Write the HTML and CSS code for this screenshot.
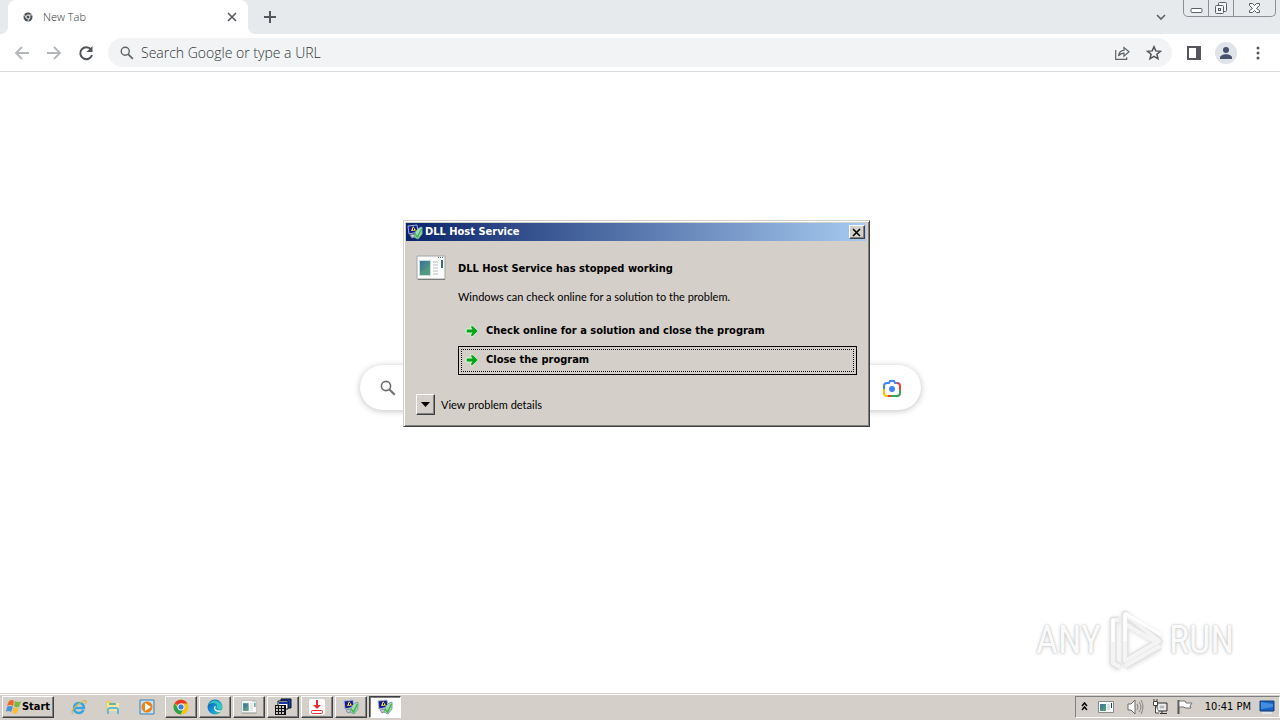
FILE: index.html
```html
<!DOCTYPE html>
<html lang="en">
<head>
<meta charset="utf-8">
<title>New Tab</title>
<link rel="stylesheet" href="styles.css">
</head>
<body>
<svg class="defs" aria-hidden="true">
  <defs>
    <linearGradient id="green" x1="0" y1="0" x2="1" y2="1"><stop offset="0" stop-color="#5fdc62"/><stop offset="1" stop-color="#009e12"/></linearGradient>
    <linearGradient id="pane" x1="0" y1="0" x2="1" y2="1"><stop offset="0" stop-color="#3c6d9c"/><stop offset="1" stop-color="#58a77b"/></linearGradient>
    <linearGradient id="edge" x1="0" y1="0" x2="1" y2="1"><stop offset="0" stop-color="#0b56a4"/><stop offset=".55" stop-color="#1697dc"/><stop offset="1" stop-color="#55d07a"/></linearGradient>
    <symbol id="report" viewBox="0 0 16 16">
      <path d="m1 2 9-1 1 7-9 2z" fill="#101c8c" stroke="#a9b2dc"/>
      <path d="m6 2 3 4.500-5 .5z" fill="#ffe13b"/><path d="M6 4h1v2H6z" fill="#222"/>
      <path d="m3 11 5-1 1 2-4 2z" fill="#c6cad4" stroke="#889"/>
      <path d="m9 7 3-3 3-1v7l-4 5-4-2z" fill="#a5d9b0" stroke="#7ea5a4"/>
      <path d="m8 10 2.500 3 4-8" fill="none" stroke="#3fba4d" stroke-width="1.600"/>
    </symbol>
    <symbol id="window" viewBox="0 0 30 26">
      <path d="M1 1h28v23H1z" fill="#fafbfa" stroke="#a1a7a6"/>
      <path d="M2 24.500h27" stroke="#777c79"/><path d="M3 5h12v16H3z" fill="#c9dddd"/>
      <path d="M4 6h10v14H4z" fill="url(#pane)"/><path d="m4 17 10-6v9H4z" fill="#5a9b82" opacity=".6"/>
      <path d="M17 7h5m-5 3h5m-5 3h5m-5 3h5m-5 3h5" stroke="#b9c0c0"/>
      <path d="M22 2.500h1m1 0h1m1 0h1" stroke="#377b75"/><path d="M25 5h2v8h-2z" fill="#3d6f72"/>
    </symbol>
    <symbol id="arrow" viewBox="0 0 14 14"><path d="M1 5h6L5 2l2-1 6 6-6 6-2-1 2-3H1z" fill="url(#green)" stroke="#d9f5d6"/><path d="M2 7h8M7 3l4 4-4 4" fill="none" stroke="#08a51c" stroke-width="2.400"/></symbol>
    <symbol id="search" viewBox="0 0 16 16"><circle cx="6" cy="6" r="4.600" fill="none" stroke="currentColor" stroke-width="1.600"/><path d="m9.200 9.200 5.500 5.500" stroke="currentColor" stroke-width="2"/></symbol>
  </defs>
</svg>

<header class="tabstrip">
  <div class="tab">
    <svg class="favicon" viewBox="0 0 10 10"><circle cx="5" cy="5" r="4.500" fill="#4c5054"/><path d="M5 3h4M3.200 6 1.300 2.800M6.700 6 4.800 9.300" stroke="#d8dadd"/><circle cx="5" cy="5" r="2" fill="#4c5054" stroke="#eee"/></svg>
    <span class="tab-title">New Tab</span>
    <button class="plain tab-close" aria-label="Close tab"><svg width="10" height="10" viewBox="0 0 10 10"><path d="m1 1 8 8m0-8-8 8" stroke="#55595e" stroke-width="1.600"/></svg></button>
  </div>
  <button class="plain new-tab" aria-label="New tab"><svg width="12" height="12" viewBox="0 0 12 12"><path d="M6 0v12M0 6h12" stroke="#54585d" stroke-width="2"/></svg></button>
  <button class="plain tab-search" aria-label="Search tabs"><svg width="10" height="8" viewBox="0 0 10 8"><path d="m1 2 4 4 4-4" fill="none" stroke="#5f6368" stroke-width="1.600"/></svg></button>
  <div class="window-controls">
    <button class="plain" aria-label="Minimize"><svg width="13" height="16" viewBox="0 0 13 16"><rect x="1" y="8.500" width="11" height="4" rx="1" fill="#fff" stroke="#5b6068"/></svg></button>
    <button class="plain" aria-label="Restore"><svg width="14" height="16" viewBox="0 0 14 16"><g fill="#f3f5f6" stroke="#5b6068"><rect x="4.500" y="2.500" width="8" height="9" rx="1"/><rect x="1.500" y="5.500" width="8" height="8" rx="1"/><rect x="4.500" y="8.500" width="2" height="2"/></g></svg></button>
    <button class="plain wide" aria-label="Close"><svg width="13" height="16" viewBox="0 0 13 16"><path d="M1.500 3.500h3l2 2 2-2h3v2l-3 3 3 2v2h-3l-2-2-2 2h-3v-2l3-2-3-3z" fill="#fff" stroke="#5b6068"/></svg></button>
  </div>
</header>

<nav class="toolbar">
  <button class="plain nav" aria-label="Back"><svg width="16" height="16" viewBox="0 0 16 16"><path d="M15 8H2m6-6L2 8l6 6" fill="none" stroke="#b4b7bb" stroke-width="1.800"/></svg></button>
  <button class="plain nav" aria-label="Forward"><svg width="16" height="16" viewBox="0 0 16 16"><path d="M1 8h13M8 2l6 6-6 6" fill="none" stroke="#b4b7bb" stroke-width="1.800"/></svg></button>
  <button class="plain nav" aria-label="Reload"><svg width="16" height="16" viewBox="0 0 16 16"><path d="M13 4.500A6 6 0 1 0 14 10" fill="none" stroke="#505459" stroke-width="2"/><path d="M14.500 1v6h-6z" fill="#505459"/></svg></button>
  <div class="omnibox">
    <svg class="omni-icon" viewBox="0 0 16 16"><use href="#search"/></svg>
    <input class="omni-input" type="text" aria-label="Address" placeholder="Search Google or type a URL">
    <button class="plain action" aria-label="Share"><svg width="16" height="16" viewBox="0 0 16 16"><path d="M1.700 5v9.300h11v-2M4.500 11C5 7.500 7 5.500 10 5.400V2.500l5 4.300-5 4.300V8.200C7.500 8.200 6 9 4.500 11z" fill="none" stroke="#5f6368" stroke-width="1.200"/></svg></button>
    <button class="plain action" aria-label="Bookmark"><svg width="16" height="16" viewBox="0 0 16 16"><path d="m8 1.700 1.800 4.200 4.600.4-3.500 3 1.100 4.500L8 11.400l-4 2.400 1.100-4.500-3.500-3 4.600-.4z" fill="none" stroke="#505459" stroke-width="1.500"/></svg></button>
  </div>
  <button class="plain tool" aria-label="Side panel"><svg width="14" height="14" viewBox="0 0 14 14"><path d="M1 1h12v12H1z" fill="#fff" stroke="#56565c" stroke-width="2"/><path d="M9 0h5v14H9z" fill="#56565c"/></svg></button>
  <button class="plain tool" aria-label="Profile"><svg width="22" height="22" viewBox="0 0 22 22"><circle cx="11" cy="11" r="11" fill="#dfe3ea"/><circle cx="11" cy="8" r="3" fill="#46516c"/><path d="M5 16c0-5 12-5 12 0v1H5z" fill="#46516c"/></svg></button>
  <button class="plain tool" aria-label="Menu"><svg width="4" height="14" viewBox="0 0 4 14"><g fill="#54585d"><circle cx="2" cy="2" r="1.500"/><circle cx="2" cy="7" r="1.500"/><circle cx="2" cy="12" r="1.500"/></g></svg></button>
</nav>

<main class="page">
  <div class="searchbox">
    <svg class="search-icon" viewBox="0 0 16 16"><use href="#search"/></svg>
    <input class="search-input" type="text" aria-label="Search">
    <button class="plain" aria-label="Search by image"><svg width="18" height="18" viewBox="0 0 18 18"><g fill="none" stroke-width="2"><path d="M4 4h2l1-2h4l1 2h2" stroke="#4285f4"/><path d="M14 4q3 0 3 3v4" stroke="#ea4335"/><path d="M1 9v5q0 3 3 3h2" stroke="#fbbc04"/><path d="M5 17h4" stroke="#ea4335"/><path d="M8 17h6q3 0 3-3v-3" stroke="#34a853"/><path d="M1 10V7q0-3 3-3" stroke="#4285f4"/></g><circle cx="9" cy="10" r="3" fill="#4285f4"/></svg></button>
  </div>

  <section class="dialog" role="dialog" aria-labelledby="caption">
    <div class="caption">
      <svg class="icon16" viewBox="0 0 16 16"><use href="#report"/></svg>
      <span id="caption" class="caption-text">DLL Host Service</span>
      <button class="raised dialog-close" aria-label="Close"><svg width="10" height="9" viewBox="0 0 10 9"><path d="m1 1 7 7m0-7-7 7" stroke="#000" stroke-width="1.600"/></svg></button>
    </div>
    <div class="dialog-body">
      <svg class="app-icon" viewBox="0 0 30 26"><use href="#window"/></svg>
      <div class="message">
        <h1 class="headline">DLL Host Service has stopped working</h1>
        <p class="detail">Windows can check online for a solution to the problem.</p>
        <button class="choice"><svg class="arrow" viewBox="0 0 14 14"><use href="#arrow"/></svg>Check online for a solution and close the program</button>
        <button class="choice focused"><svg class="arrow" viewBox="0 0 14 14"><use href="#arrow"/></svg>Close the program</button>
      </div>
    </div>
    <div class="dialog-footer">
      <button class="raised expander" id="expander" aria-labelledby="expander-label"><svg width="9" height="5" viewBox="0 0 9 5"><path d="M0 0h9L4.500 5z"/></svg></button>
      <label id="expander-label" for="expander">View problem details</label>
    </div>
  </section>

  <div class="watermark">
    <span class="mark-text">ANY</span>
    <svg class="mark-logo" viewBox="0 0 60 62"><g stroke-linejoin="round" fill="none"><path d="M20 5v47l34-20zM14 11H8v43l7 4M20 57l35-20" stroke="#e3e3e3" stroke-width="7"/><path d="M20 5v47l34-20zM14 11H8v43l7 4M20 57l35-20M20 15l29 17" stroke="#f4f4f4" stroke-width="4"/><path d="m20 4 36 22M8 10v23M20 5v27" stroke="#fff" stroke-width="3"/></g></svg>
    <span class="mark-text">RUN</span>
  </div>
</main>

<footer class="taskbar">
  <button class="raised start"><svg width="16" height="16" viewBox="1 0 16 16"><path d="M4 2q3-2 5 0L8 7q-3-2-6 0z" fill="#ef6427"/><path d="M10 2q3 2 6 0l-2 6q-3 1-5-1z" fill="#79b83a"/><path d="M2 8q3-2 6 0l-2 5q-3-2-5 0z" fill="#4b91dc"/><path d="M9 8q2 2 5 1l-2 5q-3 2-5-1z" fill="#f9bd2f"/></svg>Start</button>
  <div class="quick">
    <button class="plain" aria-label="Internet Explorer"><svg class="icon16" viewBox="0 0 16 16"><path d="M12.500 11Q11 14 8 14q-5 0-5-5t5-5q5 0 5 5H4" fill="none" stroke="#35a5dc" stroke-width="2.400"/><path d="M2 15Q-1 12 6 6q8-6 9-4 .500 1-1 3" fill="none" stroke="#d4b44c" stroke-width="1.200"/></svg></button>
    <button class="plain" aria-label="Explorer"><svg class="icon16" viewBox="0 0 16 16"><path d="M1 2h5l1 2h7v8H1z" fill="#e6cd6c"/><path d="M2 4h12v8H2z" fill="#f7e6a1"/><path d="M3 15v-4q0-2 2-2h6q2 0 2 2v4" fill="none" stroke="#65b8d4" stroke-width="2"/><path d="M4 5h7" stroke="#69b6a0" stroke-width="2"/></svg></button>
    <button class="plain" aria-label="Media Player"><svg class="icon16" viewBox="0 0 16 16"><path d="M1 1h14v14H1z" fill="#c7dfee" stroke="#3a82b7"/><circle cx="8" cy="8" r="5.500" fill="#ee8115"/><path d="m6 4 6 4-6 4z" fill="#fff"/></svg></button>
  </div>
  <div class="tasks">
    <button class="raised task" aria-label="Chrome"><svg class="icon16" viewBox="0 0 16 16"><circle cx="8" cy="8" r="7.500" fill="#fbc116"/><path d="M8 8 1.500 4.300A7.500 7.500 0 0 1 14.500 4.500H8z" fill="#e33b2e"/><path d="M1.500 4.300A7.500 7.500 0 0 0 7.500 15.500L10.500 9.500 5 9z" fill="#2ba24c"/><circle cx="8" cy="8" r="3.200" fill="#377de2" stroke="#fff"/></svg></button>
    <button class="raised task" aria-label="Edge"><svg class="icon16" viewBox="0 0 16 16"><circle cx="8" cy="8" r="7.500" fill="url(#edge)"/><path d="M1 6q5-8 12-2 4 4 1 6-3 1-4-1 1-5-4-5-3 0-5 2" fill="#35c7bd"/><path d="M9 7q-2 3 1 4 2 1 5 0l-2 2q-6 0-6-4 0-2 2-2" fill="#eaf6f8"/></svg></button>
    <button class="raised task" aria-label="Program"><svg class="icon16" viewBox="0 0 30 26"><use href="#window"/></svg></button>
    <button class="raised task" aria-label="Application"><svg class="icon18" viewBox="0 0 18 18"><path d="M7 1h10v9H7z" fill="#123bb4" stroke="#111"/><path d="M4 3h10v8H4z" fill="#fff" stroke="#111"/><path d="M5 4h9v2H5z" fill="#153aa7"/><path d="M1 7h11v10H1z" fill="#111"/><path d="M2 9h2m1 0h2m1 0h2M2 12h2m1 0h2m1 0h2M2 15h2m1 0h2m1 0h2" stroke="#fff" stroke-width="1.500"/></svg></button>
    <button class="raised task" aria-label="Downloader"><svg class="icon16" viewBox="0 0 16 16"><rect width="16" height="16" rx="2" fill="#fff"/><path d="M7 1h2v5h3l-4 4-4-4h3z" fill="#ed2933"/><rect x="2.500" y="11.500" width="11" height="3" rx="1" fill="#fff" stroke="#ed2933"/></svg></button>
    <button class="raised task" aria-label="Problem report"><svg class="icon16" viewBox="0 0 16 16"><use href="#report"/></svg></button>
    <button class="raised task active" aria-label="DLL Host Service"><svg class="icon16" viewBox="0 0 16 16"><use href="#report"/></svg></button>
  </div>
  <div class="tray">
    <svg width="7" height="9" viewBox="0 0 7 9"><path d="m1 4 2.500-3L6 4M1 8l2.500-3L6 8" fill="none" stroke="#000" stroke-width="1.500"/></svg>
    <svg class="tray-window" viewBox="0 0 16 14"><path d="M.5 1.500h15v11H.5z" fill="#fff" stroke="#868c8c"/><path d="M2 4h6v7H2z" fill="url(#pane)"/><path d="M9 5h3M9 7h3M9 9h3" stroke="#9ca"/><path d="M13 3h1v5h-1z" fill="#236"/></svg>
    <svg class="tray-sound" viewBox="0 0 17 16"><path d="M1 5h3l4-4v14l-4-4H1z" fill="#fff" stroke="#6a6a6a"/><path d="M10 5q2 3 0 6m2-8q4 5 0 10m2-12q4 7 0 14" fill="none" stroke="#858585"/></svg>
    <svg class="icon16" viewBox="0 0 16 16"><path d="M5 4h10v8H5z" fill="#ddd" stroke="#333"/><path d="M7 6h6v4H7z" fill="#b7b7b7" stroke="#fff"/><path d="M8 14.500h7M10 12v2" stroke="#333"/><path d="M1.500 2.500h4v4h-4zM2 0v2m3-2v2M3.500 7v7H7" fill="#fff" stroke="#444"/></svg>
    <svg class="tray-flag" viewBox="0 0 17 16"><path d="M2.500 1v14" stroke="#555" stroke-width="2"/><path d="M3 2h6l1 2h6l-2 3 1 2H9L8 8H3z" fill="#fff" stroke="#737373"/></svg>
    <time class="clock">10:41 PM</time>
    <svg class="icon16" viewBox="0 0 16 16"><path d="M1 2h14v10H1z" fill="#1764c0" stroke="#143c7c"/><path d="m2 3 12 2v3L2 10z" fill="#448ddd"/><path d="M3 14h10" stroke="#dde6ef" stroke-width="2"/></svg>
  </div>
</footer>
</body>
</html>
```

FILE: styles.css
```css
* { box-sizing: border-box; }

body {
  margin: 0;
  height: 100vh;
  display: flex;
  flex-direction: column;
  overflow: hidden;
  background: #fff;
  color: #000;
  font: 11px/16px "DejaVu Sans Condensed", "DejaVu Sans", sans-serif;
}

svg { display: block; flex: none; }
.defs { position: absolute; width: 0; height: 0; }
button, input { font: inherit; color: inherit; padding: 0; }
.plain { border: 0; background: none; display: flex; align-items: center; justify-content: center; }
.icon16 { width: 16px; height: 16px; }
.icon18 { width: 18px; height: 18px; }

.tabstrip {
  display: flex;
  align-items: center;
  height: 34px;
  padding: 0 4px 0 8px;
  background: #e7eaed;
}
.tab {
  position: relative;
  display: flex;
  align-items: center;
  align-self: stretch;
  width: 240px;
  padding: 0 11px 0 15px;
  border-radius: 8px 8px 0 0;
  background: #fff;
}
.tab::before, .tab::after {
  content: "";
  position: absolute;
  bottom: 0;
  width: 8px;
  height: 8px;
}
.tab::before { right: 100%; background: radial-gradient(circle at 0 0, transparent 8px, #fff 8px); }
.tab::after { left: 100%; background: radial-gradient(circle at 100% 0, transparent 8px, #fff 8px); }
.favicon { width: 10px; height: 10px; margin-right: 10px; }
.tab-title {
  flex: 1;
  color: #303336;
  font-family: "Open Sans", "Noto Sans", sans-serif;
  font-size: 11px;
  font-weight: 300;
}
.new-tab { margin-left: 16px; }
.tab-search { margin-left: auto; margin-right: 17px; }
.window-controls {
  display: flex;
  align-self: flex-start;
  height: 17px;
  border: 1px solid #8b9096;
  border-top: 0;
  border-radius: 0 0 5px 5px;
}
.window-controls button { width: 25px; border-right: 1px solid #8b9096; }
.window-controls .wide { width: 41px; border-right: 0; }

.toolbar {
  display: flex;
  align-items: center;
  height: 38px;
  padding: 0 6px;
  border-bottom: 1px solid #d9dbde;
}
.nav, .tool { width: 32px; height: 32px; }
.omnibox {
  flex: 1;
  display: flex;
  align-items: center;
  height: 29px;
  margin: 0 6px;
  padding: 0 2px 0 10px;
  border-radius: 15px;
  background: #f1f3f4;
}
.omni-icon { width: 14px; height: 14px; margin: 0 7px 0 2px; color: #5f6368; }
.omni-input {
  flex: 1;
  min-width: 0;
  border: 0;
  outline: 0;
  background: none;
  font-family: "Open Sans", "Noto Sans", sans-serif;
  font-size: 14px;
  font-weight: 300;
}
.omni-input::placeholder { color: #303336; opacity: 1; }
.action { width: 32px; height: 28px; }

.page { position: relative; flex: 1; min-height: 0; }
.searchbox {
  display: flex;
  align-items: center;
  width: 561px;
  max-width: 100%;
  height: 45px;
  margin: 293px auto 0;
  padding: 0 20px;
  border-radius: 23px;
  background: #fff;
  box-shadow: 0 1px 6px rgba(32, 33, 36, .28);
}
.search-icon { width: 16px; height: 16px; color: #6b6e70; }
.search-input { flex: 1; min-width: 0; border: 0; outline: 0; background: none; }

.dialog {
  position: absolute;
  top: 148px;
  left: calc(50% - 237px);
  width: 467px;
  padding: 2px 3px 11px 2px;
  border: 1px solid;
  border-color: #d4d0c8 #404040 #404040 #d4d0c8;
  background: #d4cfc8;
  box-shadow: inset 1px 1px #fff, inset -1px -1px #808080;
}
.caption {
  display: flex;
  align-items: center;
  height: 18px;
  padding: 0 1px;
  background: linear-gradient(90deg, #0a246a, #a6caf0);
  color: #fff;
  font-weight: bold;
}
.caption-text { flex: 1; margin-left: 2px; }
.raised {
  display: flex;
  align-items: center;
  justify-content: center;
  border: 1px solid;
  border-color: #fff #404040 #404040 #fff;
  border-radius: 0;
  background: #d4cfc8;
  box-shadow: inset -1px -1px #808080;
}
.dialog-close { width: 16px; height: 14px; }
.dialog-body { display: flex; gap: 12px; padding: 14px 9px 0 10px; }
.app-icon { width: 30px; height: 26px; }
.message { flex: 1; }
.headline { margin: 6px 0 12px; font-size: 11px; line-height: 16px; font-weight: bold; }
.detail { margin: 0 0 12px; font-family: Lato, sans-serif; }
.choice {
  display: flex;
  align-items: center;
  width: 100%;
  height: 29px;
  padding: 0 6px 2px;
  border: 1px solid transparent;
  background: none;
  font-weight: bold;
  text-align: left;
}
.focused { border-color: #000; outline: 1px dotted #000; outline-offset: -4px; }
.arrow { width: 14px; height: 14px; margin-right: 7px; }
.dialog-footer {
  display: flex;
  align-items: center;
  gap: 6px;
  margin-top: 19px;
  padding-left: 10px;
  font-family: Lato, sans-serif;
}
.expander { width: 19px; height: 21px; }

.watermark {
  position: absolute;
  right: 46px;
  bottom: 22px;
  display: flex;
  align-items: center;
  gap: 4px;
}
.mark-logo { width: 60px; height: 62px; filter: drop-shadow(0 1px 2px #ddd); }
.mark-text {
  color: #fafafa;
  font: 38px/50px "Roboto Condensed", "Liberation Sans Narrow", Roboto, sans-serif;
  text-shadow: 0 0 2px #b4b4b4, 0 1px 4px #ddd;
}

.taskbar {
  display: flex;
  align-items: center;
  height: 27px;
  padding: 0 0 1px 2px;
  border-top: 1px solid #d4cfc8;
  background: #d4cfc8;
  box-shadow: inset 0 1px #fff;
}
.start { width: 52px; height: 22px; font-weight: bold; }
.quick { display: flex; gap: 18px; margin: 0 10px 0 17px; }
.tasks { display: flex; gap: 2px; }
.task { width: 32px; height: 22px; }
.active { border-color: #404040 #fff #fff #404040; background: #fff; box-shadow: inset 1px 1px #808080; }
.tray {
  display: flex;
  align-items: center;
  height: 22px;
  margin-left: auto;
  padding: 0 4px 0 5px;
  border: 1px solid;
  border-color: #808080 #fff #fff #808080;
}
.tray-window { width: 16px; height: 14px; margin: 0 13px 0 10px; }
.tray-sound { width: 17px; height: 16px; margin-right: 8px; }
.tray-flag { width: 17px; height: 16px; margin: 0 12px 0 8px; }
.clock { margin-right: 8px; }
```
